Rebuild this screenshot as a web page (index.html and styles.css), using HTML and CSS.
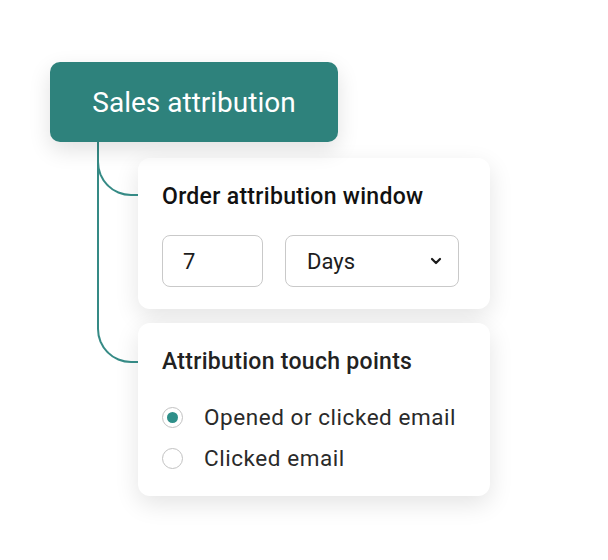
FILE: index.html
```html
<!DOCTYPE html>
<html>
<head>
<meta charset="utf-8">
<link rel="stylesheet" href="styles.css">
</head>
<body>
<div class="wrap">
  <div class="header">Sales attribution</div>
  <div class="cards">
    <div class="card card-window">
      <div class="title">Order attribution window</div>
      <div class="row">
        <div class="input">7</div>
        <div class="select">
          <span>Days</span>
          <svg class="chev" width="12" height="8" viewBox="0 0 12 8"><path d="M2 2 L6 6 L10 2" fill="none" stroke="#1a1a1a" stroke-width="2.2" stroke-linecap="round" stroke-linejoin="round"/></svg>
        </div>
      </div>
    </div>
    <div class="card card-touch">
      <div class="title title-2">Attribution touch points</div>
      <div class="radios">
        <div class="radio-row"><span class="radio on"></span><span class="label">Opened or clicked email</span></div>
        <div class="radio-row"><span class="radio"></span><span class="label">Clicked email</span></div>
      </div>
    </div>
  </div>
</div>
</body>
</html>
```
FILE: styles.css
```css
html, body {
  margin: 0;
  padding: 0;
  background: #ffffff;
}
body {
  font-family: Roboto, "Liberation Sans", sans-serif;
  width: 608px;
  height: 560px;
  overflow: hidden;
}
.wrap {
  padding: 62px 0 0 50px;
}
.header {
  position: relative;
  z-index: 2;
  width: 288px;
  height: 80px;
  box-sizing: border-box;
  background: #2e827c;
  border-radius: 10px;
  color: #ffffff;
  font-size: 28px;
  display: flex;
  align-items: center;
  justify-content: center;
  box-shadow: 0 8px 22px rgba(0, 0, 0, 0.12);
}
.cards {
  margin: 16px 0 0 88px;
  display: flex;
  flex-direction: column;
  gap: 14px;
  width: 352px;
}
.card {
  position: relative;
  background: #ffffff;
  border-radius: 12px;
  box-shadow: 0 8px 24px rgba(0, 0, 0, 0.11);
  box-sizing: border-box;
  padding: 27px 24px 0 24px;
}
.card::before {
  content: "";
  position: absolute;
  left: -41px;
  width: 41px;
  border-left: 2px solid #358a85;
  border-bottom: 2px solid #358a85;
  border-bottom-left-radius: 34px;
  box-sizing: border-box;
}
.card-window {
  height: 151px;
}
.card-window::before {
  top: -16px;
  height: 54px;
}
.card-touch {
  height: 173px;
}
.card-touch::before {
  top: -181px;
  height: 221px;
}
.title {
  font-size: 23px;
  font-weight: 500;
  color: #111111;
  line-height: 24px;
  letter-spacing: 0.3px;
}
.title-2 {
  color: #222222;
}
.row {
  display: flex;
  gap: 22px;
  margin-top: 26px;
}
.input, .select {
  height: 52px;
  box-sizing: border-box;
  border: 1.5px solid #c9c9c9;
  border-radius: 8px;
  display: flex;
  align-items: center;
  font-size: 22px;
  color: #1d1d1d;
}
.input {
  width: 101px;
  padding-left: 20px;
}
.select {
  width: 174px;
  padding: 0 16px 0 21px;
  justify-content: space-between;
}
.chev {
  display: block;
}
.radios {
  margin-top: 30px;
  display: flex;
  flex-direction: column;
  gap: 15px;
}
.radio-row {
  display: flex;
  align-items: center;
  height: 26px;
}
.radio {
  width: 21px;
  height: 21px;
  box-sizing: border-box;
  border: 1.5px solid #c2c2c2;
  border-radius: 50%;
  display: flex;
  align-items: center;
  justify-content: center;
  margin-right: 21px;
}
.radio.on::after {
  content: "";
  width: 11px;
  height: 11px;
  border-radius: 50%;
  background: #2e8f89;
}
.label {
  font-size: 22.5px;
  line-height: 26px;
  letter-spacing: 0.55px;
  color: #2a2a2a;
}
```
